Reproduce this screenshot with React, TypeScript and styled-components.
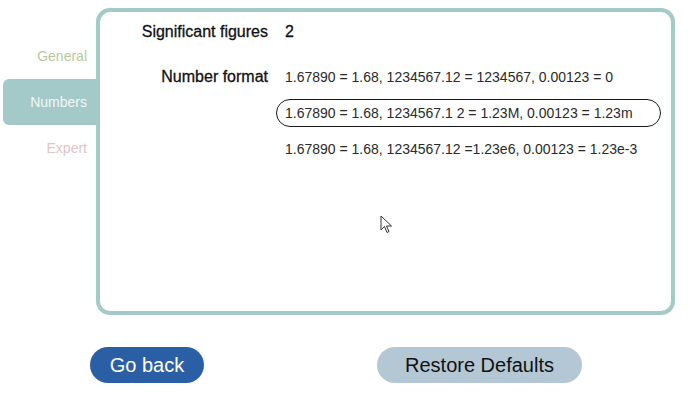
import React, { useState } from 'react';
import styled, { createGlobalStyle } from 'styled-components';

const GlobalStyle = createGlobalStyle`
  html, body {
    margin: 0;
    padding: 0;
    background: #ffffff;
    font-family: "Liberation Sans", Arial, sans-serif;
  }
`;

const Page = styled.div`
  width: 690px;
  height: 405px;
  display: flex;
  flex-direction: column;
  overflow: hidden;
`;

const Main = styled.div`
  display: flex;
  align-items: flex-start;
`;

const Sidebar = styled.nav`
  width: 96px;
  padding-top: 33px;
  display: flex;
  flex-direction: column;
`;

const Tab = styled.div<{ $active?: boolean; $color: string }>`
  height: 46px;
  margin-left: 3px;
  padding-right: 9px;
  display: flex;
  align-items: center;
  justify-content: flex-end;
  font-size: 14px;
  color: ${(p) => (p.$active ? '#f2f7f7' : p.$color)};
  background: ${(p) => (p.$active ? '#a4c9c9' : 'transparent')};
  border-radius: 6px 0 0 6px;
`;

const Panel = styled.section`
  position: relative;
  box-sizing: border-box;
  width: 579px;
  height: 307px;
  margin-top: 8px;
  border: 4px solid #a4c9c9;
  border-radius: 14px;
  padding: 8px 0 0 0;
`;

const Grid = styled.div`
  display: grid;
  grid-template-columns: 168px 385px;
  column-gap: 8px;
  row-gap: 15px;
`;

const Label = styled.div<{ $offset?: number }>`
  font-size: 16px;
  color: #111;
  -webkit-text-stroke: 0.3px #111;
  text-align: right;
  height: 24px;
  line-height: 24px;
  margin-top: ${(p) => p.$offset ?? 0}px;
`;

const Value = styled.div`
  font-size: 16px;
  color: #111;
  -webkit-text-stroke: 0.3px #111;
  height: 24px;
  line-height: 24px;
  padding-left: 9px;
`;

const Options = styled.div`
  display: flex;
  flex-direction: column;
`;

const Option = styled.div<{ $selected?: boolean }>`
  box-sizing: border-box;
  height: 28px;
  margin: 4px 0;
  padding: 0 8px;
  display: flex;
  align-items: center;
  font-size: 14px;
  color: #2a2a2a;
  border: 1px solid ${(p) => (p.$selected ? '#1a1a1a' : 'transparent')};
  border-radius: 14px;
  cursor: pointer;
`;

const Cursor = styled.svg`
  position: absolute;
  left: 280px;
  top: 203px;
`;

const Buttons = styled.div`
  display: flex;
  margin-top: 32px;
  padding-left: 90px;
  gap: 173px;
`;

const Button = styled.button<{ $primary?: boolean }>`
  height: 36px;
  width: ${(p) => (p.$primary ? '114px' : '205px')};
  border: 0;
  border-radius: 18px;
  font-family: "Liberation Sans", Arial, sans-serif;
  font-size: 20px;
  color: ${(p) => (p.$primary ? '#ffffff' : '#111111')};
  background: ${(p) => (p.$primary ? '#2b5fa5' : '#b4c7d4')};
  padding: 0;
`;

const formats = [
  '1.67890 = 1.68, 1234567.12 = 1234567, 0.00123 = 0',
  '1.67890 = 1.68, 1234567.1 2 = 1.23M, 0.00123 = 1.23m',
  '1.67890 = 1.68, 1234567.12 =1.23e6, 0.00123 = 1.23e-3',
];

export default function App() {
  const [selected, setSelected] = useState(1);

  return (
    <Page>
      <GlobalStyle />
      <Main>
        <Sidebar>
          <Tab $color="#b6c9a2">General</Tab>
          <Tab $active $color="#f2f7f7">Numbers</Tab>
          <Tab $color="#dfc4c4">Expert</Tab>
        </Sidebar>
        <Panel>
          <Grid>
            <Label>Significant figures</Label>
            <Value>2</Value>
            <Label $offset={6}>Number format</Label>
            <Options>
              {formats.map((f, i) => (
                <Option key={i} $selected={i === selected} onClick={() => setSelected(i)}>
                  {f}
                </Option>
              ))}
            </Options>
          </Grid>
          <Cursor width="13" height="19" viewBox="0 0 13 19">
            <path
              d="M1 1 L1 15 L4.5 11.5 L7 17.5 L9 16.5 L6.5 11 L11.5 11 Z"
              fill="#ffffff"
              stroke="#333"
              strokeWidth="1"
              strokeLinejoin="round"
            />
          </Cursor>
        </Panel>
      </Main>
      <Buttons>
        <Button $primary>Go back</Button>
        <Button>Restore Defaults</Button>
      </Buttons>
    </Page>
  );
}
